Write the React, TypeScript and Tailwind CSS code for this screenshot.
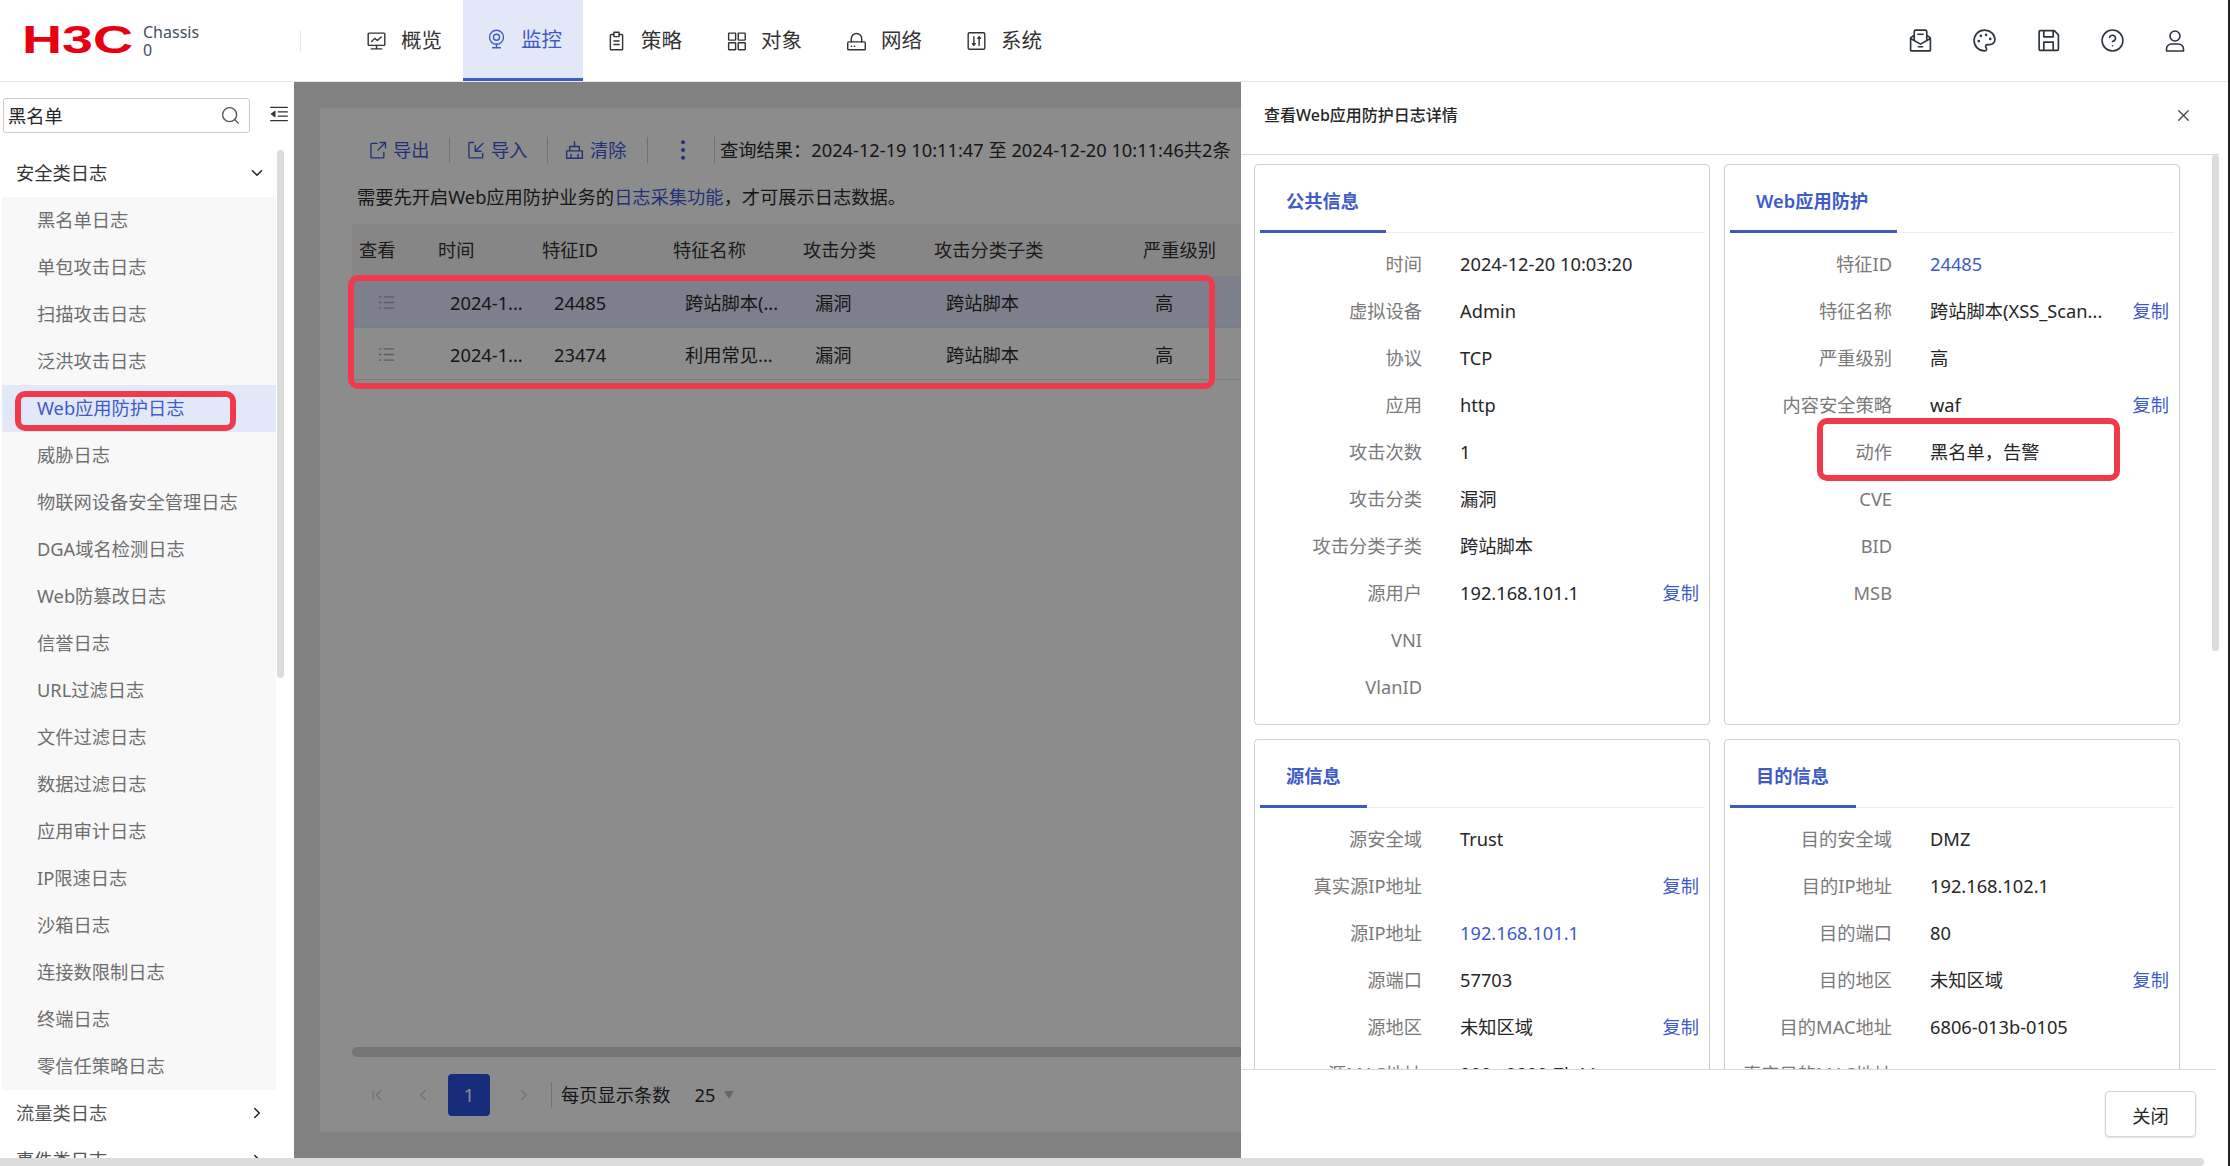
import { ChevronDown, ChevronRight, ChevronLeft, ChevronFirst, CircleHelp, Palette, Search, X } from "lucide-react";
import type { ReactNode } from "react";

function Svg({ className, children }: { className?: string; children: ReactNode }) {
  return (
    <svg viewBox="0 0 24 24" fill="none" stroke="currentColor" strokeWidth="1.6" strokeLinecap="round" strokeLinejoin="round" className={className}>
      {children}
    </svg>
  );
}

const navItems: { label: string; active?: boolean; icon: ReactNode }[] = [
  {
    label: "概览",
    icon: (
      <>
        <rect x="2.5" y="3" width="19" height="14" rx="1" />
        <path d="M12 17v4M6 21h12M6.5 12.5l3.5-3.5 3 2.5 4.5-4" />
      </>
    ),
  },
  {
    label: "监控",
    active: true,
    icon: (
      <>
        <circle cx="12" cy="10" r="8" />
        <circle cx="12" cy="10" r="3.5" />
        <path d="M12 18v4M7.5 22h9" />
      </>
    ),
  },
  {
    label: "策略",
    icon: (
      <>
        <path d="M9 4.5H6a1 1 0 0 0-1 1V21a1 1 0 0 0 1 1h12a1 1 0 0 0 1-1V5.5a1 1 0 0 0-1-1h-3" />
        <rect x="9" y="2" width="6" height="5" rx=".5" />
        <path d="M9 12h6M9 16h6" />
      </>
    ),
  },
  {
    label: "对象",
    icon: (
      <>
        <rect x="3" y="3" width="8" height="8" rx=".5" />
        <rect x="14" y="3" width="8" height="8" rx=".5" />
        <rect x="3" y="14" width="8" height="8" rx=".5" />
        <rect x="14" y="14" width="8" height="8" rx=".5" />
      </>
    ),
  },
  {
    label: "网络",
    icon: (
      <>
        <rect x="2" y="13" width="20" height="9" rx="1" />
        <path d="M6 13V9.5a6 6 0 0 1 12 0V13M6 18h.5M9.5 18h.5" />
      </>
    ),
  },
  {
    label: "系统",
    icon: (
      <>
        <rect x="2.5" y="2.5" width="19" height="19" rx="1.5" />
        <path d="M9 7v10M15 7v10M7.5 15 9 17l1.5-2M13.5 9 15 7l1.5 2" />
      </>
    ),
  },
];

const sideItems = [
  "黑名单日志",
  "单包攻击日志",
  "扫描攻击日志",
  "泛洪攻击日志",
  "Web应用防护日志",
  "威胁日志",
  "物联网设备安全管理日志",
  "DGA域名检测日志",
  "Web防篡改日志",
  "信誉日志",
  "URL过滤日志",
  "文件过滤日志",
  "数据过滤日志",
  "应用审计日志",
  "IP限速日志",
  "沙箱日志",
  "连接数限制日志",
  "终端日志",
  "零信任策略日志",
];

type Row = { label: string; value?: string; link?: boolean; copy?: boolean };

const publicRows: Row[] = [
  { label: "时间", value: "2024-12-20 10:03:20" },
  { label: "虚拟设备", value: "Admin" },
  { label: "协议", value: "TCP" },
  { label: "应用", value: "http" },
  { label: "攻击次数", value: "1" },
  { label: "攻击分类", value: "漏洞" },
  { label: "攻击分类子类", value: "跨站脚本" },
  { label: "源用户", value: "192.168.101.1", copy: true },
  { label: "VNI" },
  { label: "VlanID" },
];

const wafRows: Row[] = [
  { label: "特征ID", value: "24485", link: true },
  { label: "特征名称", value: "跨站脚本(XSS_Scan...", copy: true },
  { label: "严重级别", value: "高" },
  { label: "内容安全策略", value: "waf", copy: true },
  { label: "动作", value: "黑名单，告警" },
  { label: "CVE" },
  { label: "BID" },
  { label: "MSB" },
];

const srcRows: Row[] = [
  { label: "源安全域", value: "Trust" },
  { label: "真实源IP地址", copy: true },
  { label: "源IP地址", value: "192.168.101.1", link: true },
  { label: "源端口", value: "57703" },
  { label: "源地区", value: "未知区域", copy: true },
  { label: "源MAC地址", value: "000c-2900-7b44" },
];

const dstRows: Row[] = [
  { label: "目的安全域", value: "DMZ" },
  { label: "目的IP地址", value: "192.168.102.1" },
  { label: "目的端口", value: "80" },
  { label: "目的地区", value: "未知区域", copy: true },
  { label: "目的MAC地址", value: "6806-013b-0105" },
  { label: "真实目的MAC地址" },
];

function InfoCard({ title, tabWidth, rows }: { title: string; tabWidth: string; rows: Row[] }) {
  return (
    <section className="border border-[#cfcfcf] rounded-[4px] pb-[13px]">
      <div className="mx-[5px] h-[68px] border-b border-[#eeeeee] flex items-end">
        <div className={`${tabWidth} h-[69px] -mb-px pl-[26px] pt-[7px] flex items-center border-b-[3px] border-[#3f5bc0] text-[18.25px] font-semibold text-[#3f5bc9] whitespace-nowrap`}>
          {title}
        </div>
      </div>
      <div className="pt-[8px]">
        {rows.map(row => (
          <div key={row.label} className="h-[47px] pb-[2px] flex items-center text-[18.25px] whitespace-nowrap">
            <span className="w-[167px] text-right text-[#7a7a7a]">{row.label}</span>
            <span className={`ml-[38px] flex-1 ${row.link ? "text-[#3f5bc9]" : "text-[#262626]"}`}>{row.value}</span>
            {row.copy && <span className="mr-[10px] text-[#3f5bc9]">复制</span>}
          </div>
        ))}
      </div>
    </section>
  );
}

function Tool({ icon, label, width, iconWidth }: { icon: ReactNode; label: string; width: string; iconWidth: string }) {
  return (
    <div className={`${width} h-[26px] flex items-center gap-[5px] pl-[16px] border-r border-[#d0d0d0] text-[18.25px] text-[#3f5bd9]`}>
      <Svg className={`${iconWidth} h-[22px]`}>{icon}</Svg>
      <span>{label}</span>
    </div>
  );
}

const tableCols = "grid grid-cols-[79px_104px_131px_130px_131px_209px_1fr] pl-[7px] items-center text-[18.25px] whitespace-nowrap";

const logRows = [
  { selected: true, time: "2024-1...", id: "24485", name: "跨站脚本(..." },
  { selected: false, time: "2024-1...", id: "23474", name: "利用常见..." },
];

export default function App() {
  return (
    <div className="relative w-[2230px] h-[1166px] overflow-hidden bg-white flex font-['Noto_Sans','Noto_Sans_CJK_SC',sans-serif] text-[#333333]">
      <div className="w-[2228px] h-full flex flex-col">
        {/* top bar */}
        <header className="h-[82px] shrink-0 border-b border-[#e6e6e6] flex">
          <div className="w-[301px] flex items-center pl-[25px]">
            <svg viewBox="0 0 105 28" className="w-[105px] h-[28px] overflow-visible -mt-[3px]">
              <text x="-3" y="28" fontSize="39" fontWeight="700" fill="#e60012" textLength="111" lengthAdjust="spacingAndGlyphs" fontFamily="Liberation Sans, sans-serif">
                H3C
              </text>
            </svg>
            <div className="ml-[13px] text-[16px] leading-[18px] text-[#44505c] mt-[1px]">
              <div>Chassis</div>
              <div>0</div>
            </div>
            <div className="ml-auto h-[22px] w-px bg-[#e8e8e8]" />
          </div>
          <nav className="ml-[42px] flex">
            {navItems.map(item => (
              <div
                key={item.label}
                className={`w-[120px] h-[81px] pl-[23px] flex items-center gap-[14px] text-[20.5px] ${
                  item.active ? "bg-[#e3e8f8] border-b-[3px] border-[#3f5bc0] text-[#3f5bc9]" : "text-[#333333]"
                }`}
              >
                <Svg className="w-[21px] h-[24px] shrink-0">{item.icon}</Svg>
                <span>{item.label}</span>
              </div>
            ))}
          </nav>
          <div className="ml-auto pr-[41px] flex items-center gap-[39px] text-[#2c3440]">
            <Svg className="w-[25px] h-[25px] ml-[1px]">
              <path d="M6 11V3.5a1.5 1.5 0 0 1 1.5-1.5h9A1.5 1.5 0 0 1 18 3.5V11M6 7l-3.5 2.5V21a1 1 0 0 0 1 1h17a1 1 0 0 0 1-1V9.500L18 7M2.500 10 12 15.500 21.500 10M9.500 6h5M10 18h4" />
            </Svg>
            <Palette className="w-[25px] h-[25px]" strokeWidth={1.6} />
            <Svg className="w-[25px] h-[25px]">
              <path d="M4 2.500h13.500L21.500 6.500V20.500a1 1 0 0 1-1 1H4a1 1 0 0 1-1-1V3.500a1 1 0 0 1 1-1ZM7.500 2.500V8.500h9V2.500M7.500 21.500V13.500h9V21.500" />
            </Svg>
            <CircleHelp className="w-[25px] h-[25px]" strokeWidth={1.5} />
            <Svg className="w-[24px] h-[24px] -ml-[1px]">
              <circle cx="12" cy="7" r="5" />
              <path d="M3.500 22v-2a5 5 0 0 1 5-5h7a5 5 0 0 1 5 5v2Z" />
            </Svg>
          </div>
        </header>

        <div className="flex-1 flex min-h-0">
          {/* side menu */}
          <aside className="w-[294px] shrink-0 overflow-hidden">
            <div className="h-[68px] flex pt-[16px] pl-[3px] items-start">
              <div className="w-[247px] h-[35px] border border-[#cccccc] rounded-[3px] pl-[4px] pr-[8px] flex items-center justify-between text-[18.25px] text-[#262626]">
                <span>黑名单</span>
                <Search className="w-[21px] h-[21px] text-[#555555]" strokeWidth={1.5} />
              </div>
              <Svg className="ml-[19px] mt-[6px] w-[20px] h-[20px] text-[#333333]">
                <path d="M2 4h20M11 9.500h11M11 14.500h11M2 20h20" />
                <path d="M7 9l-4 3 4 3Z" fill="currentColor" />
              </Svg>
            </div>
            <div className="relative">
              <div className="absolute left-[277px] top-0 w-[7px] h-[528px] rounded-full bg-[#dcdcdc]" />
              <div className="w-[276px]">
                <div className="h-[47px] pb-[2px] pl-[16px] pr-[10px] flex items-center justify-between text-[18.25px] text-[#333333]">
                  <span>安全类日志</span>
                  <ChevronDown className="w-[18px] h-[18px] text-[#222222]" strokeWidth={2} />
                </div>
                <div className="ml-[2px] bg-[#f8f8f8]">
                  {sideItems.map(name => (
                    <div
                      key={name}
                      className={`h-[47px] pb-[2px] pl-[35px] flex items-center text-[18.25px] whitespace-nowrap ${
                        name === "Web应用防护日志" ? "bg-[#e3e8f8] text-[#3f5bc9]" : "text-[#6e6e6e]"
                      }`}
                    >
                      {name}
                    </div>
                  ))}
                </div>
                {["流量类日志", "事件类日志"].map(name => (
                  <div key={name} className="h-[47px] pb-[2px] pl-[16px] pr-[10px] flex items-center justify-between text-[18.25px] text-[#555555]">
                    <span>{name}</span>
                    <ChevronRight className="w-[18px] h-[18px] text-[#222222]" strokeWidth={2} />
                  </div>
                ))}
              </div>
            </div>
          </aside>

          {/* dimmed log page with the details drawer on top */}
          <main className="relative flex-1 min-w-0 bg-[#ececec] p-[26px] overflow-hidden">
            <div className="h-full bg-white pl-[32px] pt-[29px] flex flex-col">
              <div className="flex items-center h-[26px] whitespace-nowrap">
                <Tool
                  label="导出"
                  width="w-[98px]"
                  iconWidth="w-[20px]"
                  icon={<path d="M11 4H4.500a1 1 0 0 0-1 1v15.500a1 1 0 0 0 1 1H18a1 1 0 0 0 1-1V15M14.500 3H21v6.500M21 3l-9 9" />}
                />
                <Tool
                  label="导入"
                  width="w-[98px]"
                  iconWidth="w-[20px]"
                  icon={<path d="M9 3H4.500a1 1 0 0 0-1 1v16.500a1 1 0 0 0 1 1H19a1 1 0 0 0 1-1V16M20.500 4l-9 9M11 6.500V13.500h7" />}
                />
                <Tool
                  label="清除"
                  width="w-[100px]"
                  iconWidth="w-[21px]"
                  icon={<path d="M12 2.500V8M6.500 13V8h11v5M3 13h18v8.500H3ZM8 21.500V17M16 21.500V17" />}
                />
                <div className="h-[26px] w-[67px] pl-[32px] flex items-center border-r border-[#d0d0d0] text-[#3f5bd9]">
                  <svg viewBox="0 0 6 24" className="w-[6px] h-[22px]" fill="currentColor">
                    <circle cx="3" cy="3.500" r="2.200" />
                    <circle cx="3" cy="12" r="2.200" />
                    <circle cx="3" cy="20.500" r="2.200" />
                  </svg>
                </div>
                <span className="ml-[5px] text-[18.25px] text-[#2b2b2b]">查询结果：2024-12-19 10:11:47 至 2024-12-20 10:11:46共2条</span>
              </div>

              <div className="mt-[21px] pl-[5px] h-[26px] flex items-center text-[18.25px] text-[#2b2b2b] whitespace-nowrap">
                需要先开启Web应用防护业务的<span className="text-[#3f5bd9]">日志采集功能</span>，才可展示日志数据。
              </div>

              <div className="mt-[14px]">
                <div className={`${tableCols} h-[52px] bg-[#f5f5f5] text-[#333333]`}>
                  <span>查看</span>
                  <span>时间</span>
                  <span>特征ID</span>
                  <span>特征名称</span>
                  <span>攻击分类</span>
                  <span>攻击分类子类</span>
                  <span>严重级别</span>
                </div>
                {logRows.map(row => (
                  <div key={row.id} className={`${tableCols} h-[52px] pt-[2px] border-b border-[#e2e2e2] text-[#2b2b2b] ${row.selected ? "bg-[#e3e8ff]" : ""}`}>
                    <Svg className="ml-[18px] w-[19px] h-[19px] text-[#aaaaaa]">
                      <path d="M3 5h2M9 5h12M3 12h2M9 12h12M3 19h2M9 19h12" />
                    </Svg>
                    <span className="pl-[12px]">{row.time}</span>
                    <span className="pl-[12px]">{row.id}</span>
                    <span className="pl-[12px]">{row.name}</span>
                    <span className="pl-[12px]">漏洞</span>
                    <span className="pl-[12px]">跨站脚本</span>
                    <span className="pl-[12px]">高</span>
                  </div>
                ))}
              </div>

              <div className="mt-auto h-[10px] rounded-full bg-[#d5d5d5]" />

              <div className="mt-[17px] mb-[16px] h-[42px] pl-[16px] flex items-center text-[18.25px]">
                <ChevronFirst className="w-[18px] h-[18px] text-[#cfcfcf]" strokeWidth={1.5} />
                <ChevronLeft className="ml-[28px] w-[18px] h-[18px] text-[#cfcfcf]" strokeWidth={1.5} />
                <div className="ml-[16px] w-[42px] h-[42px] rounded-[4px] bg-[#2a50e0] text-white flex items-center justify-center">1</div>
                <ChevronRight className="ml-[25px] w-[18px] h-[18px] text-[#cfcfcf]" strokeWidth={1.5} />
                <div className="ml-[18px] h-[26px] w-px bg-[#d0d0d0]" />
                <span className="ml-[9px] text-[#2b2b2b]">每页显示条数</span>
                <span className="ml-[24px] text-[#2b2b2b]">25</span>
                <svg viewBox="0 0 10 8" className="ml-[9px] w-[10px] h-[8px] text-[#bbbbbb]" fill="currentColor">
                  <path d="M0 0h10L5 8Z" />
                </svg>
              </div>
            </div>

            <div className="absolute inset-0 bg-black/45" />

            <div className="absolute top-0 right-0 bottom-0 w-[987px] bg-white flex flex-col">
              <div className="h-[73px] shrink-0 border-b border-[#d8d8d8] mr-[9px] pl-[23px] pr-[26px] pb-[6px] flex items-center justify-between">
                <span className="text-[16px] font-medium text-[#262626]">查看Web应用防护日志详情</span>
                <X className="w-[19px] h-[19px] text-[#444444]" strokeWidth={1.6} />
              </div>
              <div className="relative flex-1 min-h-0 overflow-hidden pl-[13px] pt-[9px]">
                <div className="absolute left-[971px] top-0 w-[7px] h-[496px] rounded-full bg-[#dcdcdc]" />
                <div className="w-[926px] grid grid-cols-[456px_456px] gap-[14px]">
                  <InfoCard title="公共信息" tabWidth="w-[126px]" rows={publicRows} />
                  <InfoCard title="Web应用防护" tabWidth="w-[167px]" rows={wafRows} />
                  <InfoCard title="源信息" tabWidth="w-[107px]" rows={srcRows} />
                  <InfoCard title="目的信息" tabWidth="w-[126px]" rows={dstRows} />
                </div>
              </div>
              <div className="h-[89px] shrink-0 border-t border-[#d8d8d8] mr-[12px] pr-[20px] pt-[21px] flex justify-end items-start">
                <button className="w-[91px] h-[46px] pt-[3px] border border-[#d5d5d5] rounded-[4px] text-[18.25px] text-[#262626] shadow-[0_1px_2px_rgba(0,0,0,0.12)]">关闭</button>
              </div>
            </div>
          </main>
        </div>

        <div className="h-[8px] shrink-0 w-[2204px] rounded-r-[4px] bg-[#dcdcdc]" />
      </div>
      <div className="w-[2px] h-full bg-[#222222]" />

      {/* red annotation frames */}
      <div className="absolute left-[15px] top-[391px] w-[221px] h-[40px] border-[6px] border-[#f03a4c] rounded-[10px]" />
      <div className="absolute left-[348px] top-[275px] w-[867px] h-[114px] border-[6px] border-[#f03a4c] rounded-[10px]" />
      <div className="absolute left-[1817px] top-[418px] w-[303px] h-[63px] border-[6px] border-[#f03a4c] rounded-[10px]" />
    </div>
  );
}
